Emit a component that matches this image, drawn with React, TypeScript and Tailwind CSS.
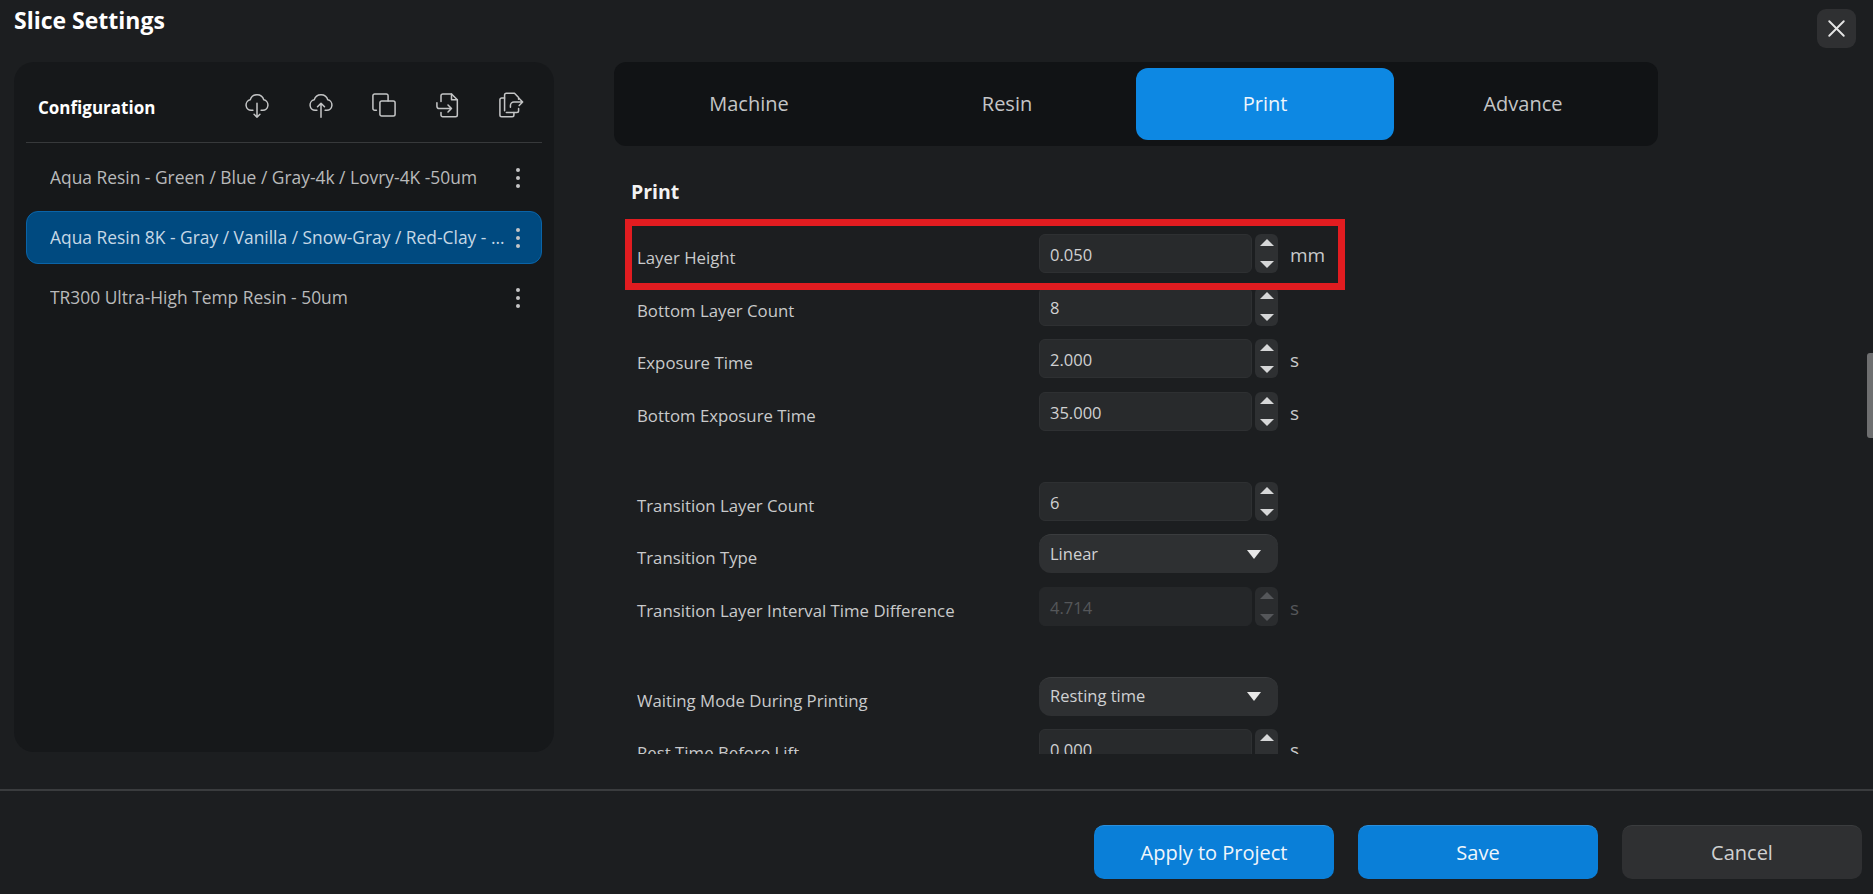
import { X } from 'lucide-react'

const font = "font-['Open_Sans',sans-serif]"

const CloudDown = () => (
  <svg width="28" height="28" viewBox="0 0 24 24" fill="none" stroke="currentColor" strokeWidth="1.3" strokeLinecap="round" strokeLinejoin="round">
    <path d="M8.500 16.500H7a4.500 4.500 0 0 1-.8-8.900 6 6 0 0 1 11.600 0A4.500 4.500 0 0 1 17 16.500h-1.500" />
    <path d="M12 10.500v12M9.500 20l2.500 2.500 2.500-2.500" />
  </svg>
)

const CloudUp = () => (
  <svg width="28" height="28" viewBox="0 0 24 24" fill="none" stroke="currentColor" strokeWidth="1.3" strokeLinecap="round" strokeLinejoin="round">
    <path d="M8.500 16.500H7a4.500 4.500 0 0 1-.8-8.900 6 6 0 0 1 11.600 0A4.500 4.500 0 0 1 17 16.500h-1.500" />
    <path d="M12 22.500v-12M9 13.500l3-3 3 3" />
  </svg>
)

const CopyIcon = () => (
  <svg width="28" height="28" viewBox="0 0 24 24" fill="none" stroke="currentColor" strokeWidth="1.3" strokeLinecap="round" strokeLinejoin="round">
    <rect x="8.500" y="8.500" width="13" height="13" rx="1.500" />
    <path d="M5.500 16.500H4A1.500 1.500 0 0 1 2.500 15V4A1.500 1.500 0 0 1 4 2.500h10A1.500 1.500 0 0 1 15.500 4v4.500" />
  </svg>
)

const ImportIcon = () => (
  <svg width="28" height="28" viewBox="0 0 24 24" fill="none" stroke="currentColor" strokeWidth="1.3" strokeLinecap="round" strokeLinejoin="round">
    <path d="M6 9V4A1.500 1.500 0 0 1 7.500 2.500H15l5 5v13a1.500 1.500 0 0 1-1.500 1.500h-11A1.500 1.500 0 0 1 6 20.500V18.500" />
    <path d="M15 2.500v5h5" />
    <path d="M2.500 10v3a2 2 0 0 0 2 2H15M12 12l3 3-3 3" />
  </svg>
)

const ExportIcon = () => (
  <svg width="28" height="28" viewBox="0 0 24 24" fill="none" stroke="currentColor" strokeWidth="1.3" strokeLinecap="round" strokeLinejoin="round">
    <path d="M6.500 6H4A1.500 1.500 0 0 0 2.500 7.500v13A1.500 1.500 0 0 0 4 22h9a1.500 1.500 0 0 0 1.500-1.500V18.500" />
    <path d="M6.500 17V3.500A1.500 1.500 0 0 1 8 2h7l3.500 3.500v1.500M18.500 15v2a1.500 1.500 0 0 1-1.500 1.500H8" />
    <path d="M11.500 14v-1.500a3 3 0 0 1 3-3H22M19 6.500l3 3-3 3" />
  </svg>
)

const Dots = () => (
  <div className="flex flex-col gap-[4px] shrink-0">
    <div className="w-[4px] h-[4px] rounded-full bg-[#c4c5c6]" />
    <div className="w-[4px] h-[4px] rounded-full bg-[#c4c5c6]" />
    <div className="w-[4px] h-[4px] rounded-full bg-[#c4c5c6]" />
  </div>
)

const Arrow = ({ up, dim }: { up?: boolean; dim?: boolean }) => (
  <div
    className={
      'w-0 h-0 border-x-[7px] border-x-transparent ' +
      (up ? 'border-b-[7px] ' : 'border-t-[7px] ') +
      (up
        ? dim
          ? 'border-b-[#55575a]'
          : 'border-b-[#d6d7d8]'
        : dim
          ? 'border-t-[#55575a]'
          : 'border-t-[#d6d7d8]')
    }
  />
)

const NumberRow = ({ label, value, unit, disabled }: { label: string; value: string; unit?: string; disabled?: boolean }) => (
  <div className="flex items-start h-[39px] mb-[13.5px]">
    <div className="w-[402px] shrink-0 text-[16.8px] leading-[39px] mt-[4px] text-[#c9cacb]">{label}</div>
    <div
      className={
        'w-[213px] h-[39px] rounded-[6px] border pl-[10px] text-[16.5px] leading-[39px] ' +
        (disabled ? 'border-[#252729] bg-[#252729] text-[#55575a]' : 'border-[#2e3032] bg-[#282a2c] text-[#d0d1d2]')
      }
    >
      {value}
    </div>
    <div className={'ml-[3px] w-[23px] h-[39px] rounded-[6px] flex flex-col items-center justify-between py-[5px] ' + (disabled ? 'bg-[#2a2c2e]' : 'bg-[#2e3032]')}>
      <Arrow up dim={disabled} />
      <Arrow dim={disabled} />
    </div>
    {unit && (
      <div className={'ml-[12px] text-[19px] leading-[39px] mt-[2px] ' + (disabled ? 'text-[#55575a]' : 'text-[#c9cacb]')}>{unit}</div>
    )}
  </div>
)

const SelectRow = ({ label, value }: { label: string; value: string }) => (
  <div className="flex items-start h-[39px] mb-[13.5px]">
    <div className="w-[402px] shrink-0 text-[16.8px] leading-[39px] mt-[4px] text-[#c9cacb]">{label}</div>
    <div className="w-[239px] h-[39px] rounded-[12px] bg-[#2e3032] border-t border-[#3a3c3e] flex items-center justify-between pl-[11px] pr-[17px] text-[16.5px] text-[#d0d1d2]">
      <span>{value}</span>
      <div className="w-0 h-0 border-x-[7.500px] border-x-transparent border-t-[9px] border-t-[#e8e8e8]" />
    </div>
  </div>
)

const presets = [
  { name: 'Aqua Resin - Green / Blue / Gray-4k / Lovry-4K -50um' },
  { name: 'Aqua Resin 8K - Gray / Vanilla / Snow-Gray / Red-Clay - 50um', active: true },
  { name: 'TR300 Ultra-High Temp Resin - 50um' },
]

const tabs = ['Machine', 'Resin', 'Print', 'Advance']

export default function App() {
  return (
    <div className={`${font} w-full h-[894px] bg-[#1c1e20] flex flex-col relative overflow-hidden`}>
      <div className="h-[62px] shrink-0 flex items-start justify-between pl-[14px] pr-[17px]">
        <h1 className="text-[23px] leading-[41px] font-bold text-white">Slice Settings</h1>
        <button className="mt-[9px] w-[39px] h-[39px] rounded-[9px] bg-[#2f3032] flex items-center justify-center text-[#e4e4e4]">
          <X size={29} strokeWidth={1.6} />
        </button>
      </div>

      <div className="flex h-[727px] shrink-0">
        <div className="ml-[14px] w-[540px] h-[690px] rounded-[20px] bg-[#16181a] px-[12px] shrink-0">
          <div className="h-[81px] flex items-center justify-between border-b border-[#37393b] pt-[6px] pl-[12px] pr-[17px]">
            <span className="text-[17px] font-bold text-white mt-[6px]">Configuration</span>
            <div className="flex items-center gap-[35.500px] text-[#c4c5c6]">
              <CloudDown />
              <CloudUp />
              <CopyIcon />
              <ImportIcon />
              <ExportIcon />
            </div>
          </div>
          <div className="mt-[8px] flex flex-col gap-[7px]">
            {presets.map((p) => (
              <div
                key={p.name}
                className={
                  'h-[53px] rounded-[12px] flex items-center pl-[23px] pr-[21px] gap-[10px] text-[17.4px] border ' +
                  (p.active ? 'bg-[#004a80] border-[#0a64a8] text-[#c6d8e6]' : 'border-transparent text-[#b9babb]')
                }
              >
                <span className="flex-1 truncate">{p.name}</span>
                <Dots />
              </div>
            ))}
          </div>
        </div>

        <div className="ml-[60px] w-[1044px] shrink-0 flex flex-col">
          <div className="h-[84px] shrink-0 rounded-[12px] bg-[#111315] p-[6px] flex">
            {tabs.map((t) => (
              <div
                key={t}
                className={
                  'w-[258.500px] rounded-[12px] flex items-center justify-center text-[20px] ' +
                  (t === 'Print' ? 'bg-[#0d88e3] text-[#eef6fc]' : 'text-[#c4c5c6]')
                }
              >
                {t}
              </div>
            ))}
          </div>

          <div className="relative h-[608px] overflow-hidden pl-[17px]">
            <h2 className="text-[19.500px] leading-[24px] font-bold text-[#f2f2f2] mt-[34px]">Print</h2>
            <div className="pl-[6px] mt-[30px]">
              <div className="relative">
                <NumberRow label="Layer Height" value="0.050" unit="mm" />
                <div className="absolute left-[-12.500px] top-[-15px] w-[720px] h-[71px] border-[7.500px] border-[#e11c20]" />
              </div>
              <NumberRow label="Bottom Layer Count" value="8" />
              <NumberRow label="Exposure Time" value="2.000" unit="s" />
              <NumberRow label="Bottom Exposure Time" value="35.000" unit="s" />
              <div className="h-[37.500px]" />
              <NumberRow label="Transition Layer Count" value="6" />
              <SelectRow label="Transition Type" value="Linear" />
              <NumberRow label="Transition Layer Interval Time Difference" value="4.714" unit="s" disabled />
              <div className="h-[37.500px]" />
              <SelectRow label="Waiting Mode During Printing" value="Resting time" />
              <NumberRow label="Rest Time Before Lift" value="0.000" unit="s" />
            </div>
          </div>
        </div>
      </div>

      <div className="border-t-2 border-[#3a3c3e] flex-1 flex items-start justify-end gap-[24px] pt-[34px] pr-[11px]">
        <button className="w-[240px] h-[54px] rounded-[10px] bg-[#0a7fd8] border-t border-[#2a8fdc] text-[20px] text-[#f0f6fb]">Apply to Project</button>
        <button className="w-[240px] h-[54px] rounded-[10px] bg-[#0a7fd8] border-t border-[#2a8fdc] text-[20px] text-[#f0f6fb]">Save</button>
        <button className="w-[240px] h-[54px] rounded-[10px] bg-[#2f3032] border-t border-[#3a3c3e] text-[20px] text-[#cfd0d1]">Cancel</button>
      </div>

      <div className="absolute right-0 top-[353px] w-[6px] h-[85px] rounded-l-[3px] bg-[#6e6f70]" />
    </div>
  )
}
